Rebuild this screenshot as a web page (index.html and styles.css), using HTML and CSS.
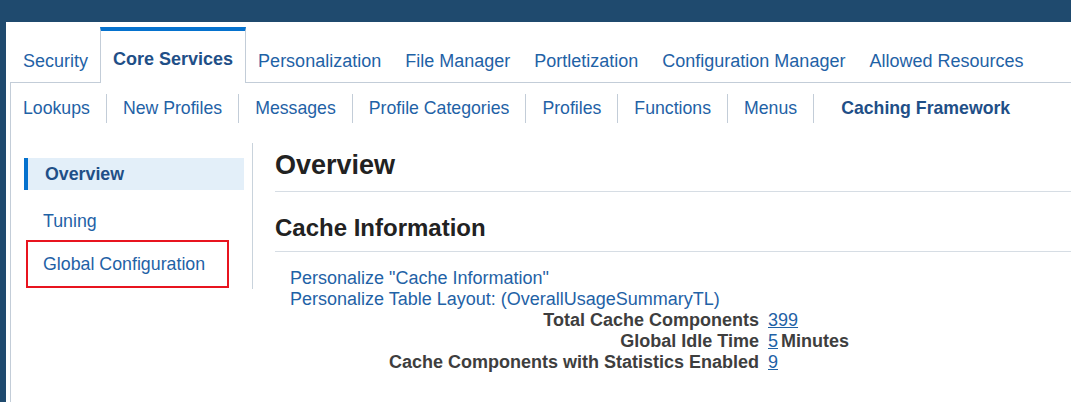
FILE: index.html
```html
<!DOCTYPE html>
<html>
<head>
<meta charset="utf-8">
<link rel="stylesheet" href="styles.css">
</head>
<body>
<div class="page">
  <div class="tabs">
    <div class="tab">Security</div>
    <div class="tab active">Core Services</div>
    <div class="tab">Personalization</div>
    <div class="tab">File Manager</div>
    <div class="tab">Portletization</div>
    <div class="tab">Configuration Manager</div>
    <div class="tab">Allowed Resources</div>
  </div>
  <div class="content">
    <div class="subtabs">
      <div class="sub first">Lookups</div>
      <div class="sub">New Profiles</div>
      <div class="sub">Messages</div>
      <div class="sub">Profile Categories</div>
      <div class="sub">Profiles</div>
      <div class="sub">Functions</div>
      <div class="sub">Menus</div>
      <div class="sub selected">Caching Framework</div>
    </div>
    <div class="body">
      <div class="nav">
        <div class="nav-item current">Overview</div>
        <div class="nav-item tuning">Tuning</div>
        <div class="nav-item highlight">Global Configuration</div>
      </div>
      <div class="main">
        <h1 class="title">Overview</h1>
        <h2 class="section">Cache Information</h2>
        <div class="links">
          <a class="link">Personalize "Cache Information"</a>
          <a class="link">Personalize Table Layout: (OverallUsageSummaryTL)</a>
        </div>
        <div class="info">
          <div class="label">Total Cache Components</div>
          <div class="value"><a class="num">399</a></div>
          <div class="label">Global Idle Time</div>
          <div class="value"><a class="num">5</a><span class="unit">Minutes</span></div>
          <div class="label">Cache Components with Statistics Enabled</div>
          <div class="value"><a class="num">9</a></div>
        </div>
      </div>
    </div>
  </div>
</div>
</body>
</html>
```

FILE: styles.css
```css
html, body {
  margin: 0;
  padding: 0;
}
body {
  background: #1f4a6e;
  font-family: "Liberation Sans", Arial, sans-serif;
  width: 1071px;
  height: 402px;
  overflow: hidden;
}
.page {
  margin: 22px 0 0 6px;
  background: #ffffff;
  height: 380px;
  padding: 5px 0 0 4px;
  box-sizing: border-box;
  display: flex;
  flex-direction: column;
}
.tabs {
  display: flex;
  align-items: flex-end;
  height: 55px;
  flex: none;
  border-bottom: 1px solid #c3cdd8;
  padding-left: 1px;
}
.tab {
  font-size: 18px;
  line-height: 22px;
  color: #1f62a6;
  padding: 0 12px 10px;
  white-space: nowrap;
}
.tab.active {
  box-sizing: border-box;
  height: 56px;
  margin-bottom: -1px;
  border-top: 4px solid #0572ce;
  border-left: 1px solid #c3cdd8;
  border-right: 1px solid #c3cdd8;
  background: #ffffff;
  font-weight: bold;
  color: #1f4f87;
  padding: 17px 12px 0;
}
.content {
  border-left: 1px solid #c3cdd8;
  flex: 1;
}
.subtabs {
  display: flex;
  padding-top: 11px;
}
.sub {
  font-size: 17.7px;
  line-height: 29px;
  height: 29px;
  color: #1f62a6;
  padding: 0 16px;
  border-left: 1px solid #c3cdd8;
  white-space: nowrap;
}
.sub.first {
  border-left: none;
  padding-left: 12px;
}
.sub.selected {
  font-weight: bold;
  color: #1f4f87;
  padding-left: 27px;
}
.body {
  display: flex;
  align-items: flex-start;
}
.nav {
  width: 241px;
  flex: none;
  margin-top: 20px;
  border-right: 1px solid #c9d3dc;
  display: flex;
  flex-direction: column;
}
.nav-item {
  font-size: 17.8px;
  line-height: 22px;
  color: #1f62a6;
  white-space: nowrap;
}
.nav-item.current {
  margin: 15px 8px 0 13px;
  height: 32px;
  line-height: 32px;
  border-left: 4px solid #0572ce;
  background: #e3eff9;
  padding-left: 17px;
  font-weight: bold;
  color: #1f4f87;
}
.nav-item.tuning {
  margin-top: 20px;
  padding-left: 32px;
}
.nav-item.highlight {
  margin: 8px 0 1px 15px;
  width: 203px;
  height: 48px;
  box-sizing: border-box;
  border: 2px solid #e8141f;
  padding: 11px 0 0 15px;
}
.main {
  flex: 1;
  padding: 26px 0 0 22px;
}
.title {
  margin: 0;
  font-size: 27px;
  line-height: 32px;
  font-weight: bold;
  color: #222222;
  padding-bottom: 10px;
  border-bottom: 1px solid #d6dde4;
}
.section {
  margin: 22px 0 0;
  font-size: 24px;
  line-height: 28px;
  font-weight: bold;
  color: #222222;
  padding-bottom: 9px;
  border-bottom: 1px solid #d6dde4;
}
.links {
  margin-top: 16px;
  padding-left: 15px;
  display: flex;
  flex-direction: column;
}
.link {
  font-size: 18px;
  line-height: 21px;
  color: #1f62a6;
}
.info {
  display: grid;
  grid-template-columns: 469px auto;
  column-gap: 9px;
  padding-left: 15px;
  margin-top: 0;
  font-size: 18px;
  line-height: 21px;
}
.label {
  text-align: right;
  font-weight: bold;
  color: #3e3e3e;
}
.num {
  color: #1f62a6;
  text-decoration: underline;
}
.unit {
  font-weight: bold;
  color: #3e3e3e;
  margin-left: 3px;
}
```
